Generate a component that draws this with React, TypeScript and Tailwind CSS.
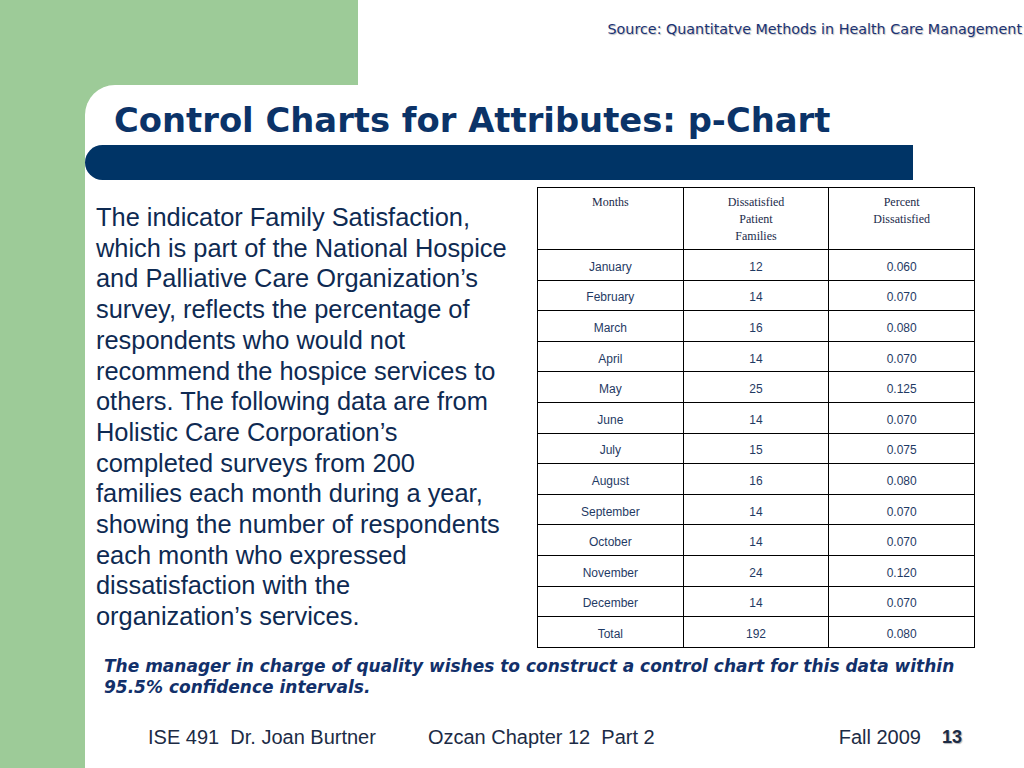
import React from 'react';

const rows: [string, string, string][] = [
  ['January', '12', '0.060'],
  ['February', '14', '0.070'],
  ['March', '16', '0.080'],
  ['April', '14', '0.070'],
  ['May', '25', '0.125'],
  ['June', '14', '0.070'],
  ['July', '15', '0.075'],
  ['August', '16', '0.080'],
  ['September', '14', '0.070'],
  ['October', '14', '0.070'],
  ['November', '24', '0.120'],
  ['December', '14', '0.070'],
  ['Total', '192', '0.080'],
];

const lines = [
  'The indicator Family Satisfaction,',
  'which is part of the National Hospice',
  'and Palliative Care Organization’s',
  'survey, reflects the percentage of',
  'respondents who would not',
  'recommend the hospice services to',
  'others. The following data are from',
  'Holistic Care Corporation’s',
  'completed surveys from 200',
  'families each month during a year,',
  'showing the number of respondents',
  'each month who expressed',
  'dissatisfaction with the',
  'organization’s services.',
];

const serif = "font-['Liberation_Serif','Times_New_Roman',serif]";
const sans = "font-['Liberation_Sans',Arial,sans-serif]";

function DataTable() {
  return (
    <table className="w-[438px] border-collapse border border-black text-[12px] text-[#1f3a64]">
      <thead>
        <tr className="h-[62px]">
          <th className={`${serif} w-[146px] border border-black pt-[6px] align-top text-[12px] leading-[17px] font-normal text-[#1a2a4a]`}>Months</th>
          <th className={`${serif} w-[146px] border border-black pt-[6px] align-top text-[12px] leading-[17px] font-normal text-[#1a2a4a]`}>
            Dissatisfied
            <br />
            Patient
            <br />
            Families
          </th>
          <th className={`${serif} w-[146px] border border-black pt-[6px] align-top text-[12px] leading-[17px] font-normal text-[#1a2a4a]`}>
            Percent
            <br />
            Dissatisfied
          </th>
        </tr>
      </thead>
      <tbody className={sans}>
        {rows.map((r) => (
          <tr key={r[0]} className="h-[30.6px]">
            <td className="border border-black pt-[4px] text-center">{r[0]}</td>
            <td className="border border-black pt-[4px] text-center">{r[1]}</td>
            <td className="border border-black pt-[4px] text-center">{r[2]}</td>
          </tr>
        ))}
      </tbody>
    </table>
  );
}

export default function App() {
  return (
    <div className="flex h-[768px] w-[1024px] flex-col overflow-hidden bg-white">
      {/* top band */}
      <div className="flex h-[85px] shrink-0">
        <div className="w-[358px] bg-[#9dcb98]" />
        <div className="flex flex-1 justify-end pt-[20px] pr-[2px]">
          <div className="font-['DejaVu_Sans',Verdana,sans-serif] text-[14.3px] leading-[18px] whitespace-nowrap text-[#1b3374] [text-shadow:1px_1px_1px_rgba(0,0,0,0.25)]">
            Source: Quantitatve Methods in Health Care Management
          </div>
        </div>
      </div>

      {/* body */}
      <div className="flex flex-1 bg-[#9dcb98] pl-[85px]">
        <div className="flex flex-1 flex-col rounded-tl-[30px] bg-white">
          <h1 className="mt-[18px] pl-[29px] font-['DejaVu_Sans',Verdana,sans-serif] text-[33.8px] leading-[36px] font-bold whitespace-nowrap text-[#0b3368]">
            Control Charts for Attributes: p-Chart
          </h1>
          <div className="mt-[6px] h-[35px] w-[828px] rounded-l-[18px] bg-[#003466]" />

          <div className="mt-[7px] flex">
            <p className={`${sans} mt-[15px] w-[430px] pl-[11px] text-[25.4px] leading-[30.7px] whitespace-nowrap text-[#0e2a52]`}>
              {lines.map((l) => (
                <span key={l} className="block">
                  {l}
                </span>
              ))}
            </p>
            <div className="ml-[22px]">
              <DataTable />
            </div>
          </div>

          <p className="mt-[8px] pl-[19px] font-['DejaVu_Sans',Verdana,sans-serif] text-[17px] leading-[21px] font-bold italic whitespace-nowrap text-[#12306a]">
            The manager in charge of quality wishes to construct a control chart for this data within
            <br />
            95.5% confidence intervals.
          </p>

          <div className={`${sans} mt-auto mb-[16px] flex items-center text-[20px] text-[#1c2b45]`}>
            <span className="ml-[63px]">ISE 491&nbsp; Dr. Joan Burtner</span>
            <span className="ml-[52px]">Ozcan Chapter 12&nbsp; Part 2</span>
            <span className="ml-auto">Fall 2009</span>
            <span className="mr-[62px] ml-[21px] font-bold text-[18px] [text-shadow:1px_1px_1px_rgba(0,0,0,0.3)]">13</span>
          </div>
        </div>
      </div>
    </div>
  );
}
